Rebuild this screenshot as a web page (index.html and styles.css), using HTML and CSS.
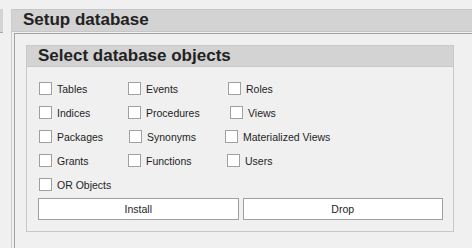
FILE: index.html
```
<!DOCTYPE html>
<html lang="en">

<head>
    <meta charset="UTF-8">
    <meta name="viewport" content="width=device-width, initial-scale=1.0">
    <title>Setup database</title>
    <link rel="stylesheet" href="styles.css">
</head>

<body>
    <div class="screen">
        <!-- Neighbouring panel, cut off at the left -->
        <div class="side-stub">
            <div class="stub-head"></div>
        </div>

        <!-- Setup panel -->
        <div class="panel">
            <div class="panel-head">Setup database</div>
            <div class="panel-body">
                <div class="group">
                    <div class="group-head">Select database objects</div>
                    <div class="group-body">
                        <div class="options">
                            <label class="opt"><input type="checkbox" class="box">Tables</label>
                            <label class="opt"><input type="checkbox" class="box">Events</label>
                            <label class="opt"><input type="checkbox" class="box">Roles</label>

                            <label class="opt"><input type="checkbox" class="box">Indices</label>
                            <label class="opt"><input type="checkbox" class="box">Procedures</label>
                            <label class="opt shift-2"><input type="checkbox" class="box">Views</label>

                            <label class="opt"><input type="checkbox" class="box">Packages</label>
                            <label class="opt shift-1"><input type="checkbox" class="box">Synonyms</label>
                            <label class="opt shift-back-3"><input type="checkbox" class="box">Materialized Views</label>

                            <label class="opt"><input type="checkbox" class="box">Grants</label>
                            <label class="opt"><input type="checkbox" class="box">Functions</label>
                            <label class="opt shift-back-1"><input type="checkbox" class="box">Users</label>

                            <label class="opt"><input type="checkbox" class="box">OR Objects</label>
                        </div>
                        <div class="actions">
                            <button class="btn">Install</button>
                            <button class="btn">Drop</button>
                        </div>
                    </div>
                </div>
            </div>
        </div>
    </div>
</body>

</html>
```

FILE: styles.css
```
body {
    margin: 0;
    padding: 0;
    background-color: #f0f0f0;
    font-family: "Liberation Sans", Arial, sans-serif;
    font-size: 10.5px;
    color: #1e1e1e;
}

.screen {
    display: flex;
    height: 248px;
    padding-top: 9px;
    box-sizing: border-box;
    overflow: hidden;
}
/* Left stub */

.side-stub {
    width: 3px;
}

.stub-head {
    height: 24px;
    background-color: #d3d3d3;
    border-bottom: 1px solid #a8a8a8;
    box-sizing: border-box;
}
/* Panel */

.panel {
    flex: 1;
    display: flex;
    flex-direction: column;
    margin-left: 8px;
    border-left: 1px solid #cdcdcd;
}

.panel-head {
    height: 23px;
    box-sizing: border-box;
    background-color: #d3d3d3;
    border-top: 1px solid #c6c6c6;
    border-bottom: 1px solid #c6c6c6;
    padding-left: 11px;
    font-weight: bold;
    font-size: 17px;
    line-height: 20px;
    color: #222;
}

.panel-body {
    flex: 1;
    margin-top: 1px;
    margin-left: 2px;
    border-top: 1px solid #a0a0a0;
    border-left: 1px solid #a0a0a0;
    padding: 11px 0 0 11px;
}
/* Group box */

.group {
    width: 428px;
    height: 187px;
    box-sizing: border-box;
    display: flex;
    flex-direction: column;
}

.group-head {
    height: 22px;
    box-sizing: border-box;
    background-color: #d3d3d3;
    border: 1px solid #c8c8c8;
    padding-left: 11px;
    font-weight: bold;
    font-size: 17px;
    line-height: 19px;
    color: #222;
}

.group-body {
    flex: 1;
    border: 1px solid #c8c8c8;
    border-top: none;
    padding: 15px 10px 11px 11px;
}

.options {
    display: grid;
    grid-template-columns: 89px 100px 1fr;
    grid-auto-rows: 13px;
    row-gap: 11px;
    padding-left: 1px;
}

.opt {
    display: flex;
    align-items: center;
    height: 13px;
    white-space: nowrap;
}

.box {
    appearance: none;
    -webkit-appearance: none;
    flex: none;
    width: 13px;
    height: 13px;
    margin: 0 5px 0 0;
    background-color: #fff;
    border: 1px solid #a0a0a0;
    box-sizing: border-box;
}

.shift-1 {
    margin-left: 1px;
}

.shift-2 {
    margin-left: 2px;
}

.shift-back-1 {
    margin-left: -1px;
}

.shift-back-3 {
    margin-left: -3px;
}
/* Buttons */

.actions {
    display: flex;
    gap: 4px;
    margin-top: 7px;
}

.btn {
    flex: 1;
    height: 22px;
    background-color: #fff;
    border: 1px solid #a0a0a0;
    font-family: "Liberation Sans", Arial, sans-serif;
    font-size: 10.5px;
    color: #1e1e1e;
    padding: 0;
}
```
